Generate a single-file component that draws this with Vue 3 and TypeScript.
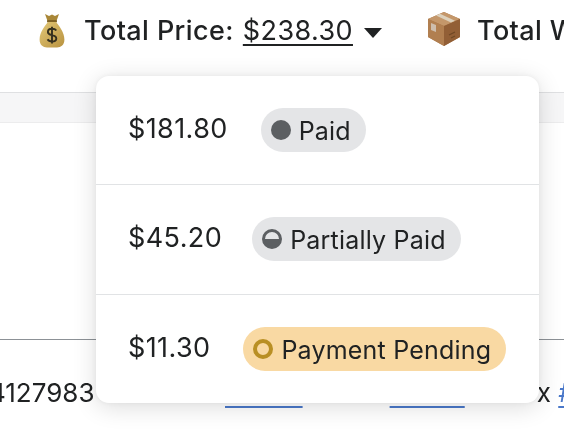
<script setup lang="ts">
interface Row { amount: string; label: string; kind: 'paid' | 'partial' | 'pending' }
const rows: Row[] = [
  { amount: '$181.80', label: 'Paid', kind: 'paid' },
  { amount: '$45.20', label: 'Partially Paid', kind: 'partial' },
  { amount: '$11.30', label: 'Payment Pending', kind: 'pending' },
]
</script>

<template>
  <div class="page">
    <header class="bar">
      <svg class="bag" viewBox="0 0 26 35" aria-hidden="true">
        <defs>
          <linearGradient id="bagFill" x1="0" y1="0" x2="1" y2="1">
            <stop offset="0" stop-color="#e3c878" />
            <stop offset="1" stop-color="#b8923f" />
          </linearGradient>
        </defs>
        <path d="M6 1 L10 3 L13 1.5 L16 3 L20 1 L17.5 8 L8.5 8 Z" fill="#a98737" />
        <rect x="8" y="7" width="10" height="2.4" rx="1" fill="#7f6225" />
        <path d="M9 9 C6 13 .6 19 .6 26.5 C.6 32 4 34.4 8 34.4 L18 34.4 C22 34.4 25.4 32 25.4 26.5 C25.4 19 20 13 17 9 Z" fill="url(#bagFill)" />
        <path d="M17.3 17.6 C16.4 16.2 14.8 15.7 13 15.7 C10.6 15.7 8.9 16.9 8.9 18.9 C8.9 21 10.8 21.6 13 22.1 C15.3 22.6 17.3 23.2 17.3 25.4 C17.3 27.4 15.4 28.5 13 28.5 C11 28.5 9.4 27.8 8.6 26.3 M13 13.8 V30.4" fill="none" stroke="#35301f" stroke-width="1.9" />
      </svg>
      <span class="total">Total Price:</span>
      <span class="price">$238.30</span>
      <span class="caret"></span>
      <svg class="box" viewBox="0 0 34 36" aria-hidden="true">
        <path d="M17 1 L33 8 L33 26 L17 35 L1 26 L1 8 Z" fill="#a8764a" />
        <path d="M17 1 L33 8 L17 15 L1 8 Z" fill="#c4976a" />
        <path d="M17 15 L33 8 L33 26 L17 35 Z" fill="#925f36" />
        <path d="M17 15 L1 8 L1 26 L17 35 Z" fill="#b17f50" />
        <path d="M9 4.5 L13 2.8 L28 9.8 L24 11.5 Z" fill="#dcd0bb" />
        <path d="M4 12 L9 14 L9 21 L4 19 Z" fill="#d8d3cc" opacity=".75" />
        <path d="M22 24 L28 21 M24 27 L28 25" stroke="#6f4825" stroke-width="1.2" />
      </svg>
      <span class="total second">Total Weight</span>
    </header>

    <div class="band"></div>
    <div class="panel"></div>

    <div class="cells">
      <span class="order">4127983</span>
      <a class="link first">#1042</a>
      <a class="link second-link">#1042</a>
      <span class="tail">x <a class="link">#</a></span>
    </div>

    <div class="popover">
      <div v-for="row in rows" :key="row.amount" class="row">
        <span class="amount">{{ row.amount }}</span>
        <span class="badge" :class="row.kind">
          <span class="dot"></span>
          <span>{{ row.label }}</span>
        </span>
      </div>
    </div>
  </div>
</template>

<style>
html, body { margin: 0; background: #fff; }
</style>

<style scoped>
.page {
  position: relative;
  width: 564px;
  height: 444px;
  overflow: hidden;
  background: #fff;
  color: #202223;
  font-family: Inter, "Liberation Sans", sans-serif;
  filter: blur(0.35px);
}
.bar {
  height: 92px;
  box-sizing: border-box;
  padding: 12px 0 0 39px;
  display: flex;
  align-items: flex-start;
  white-space: nowrap;
  font-size: 27px;
  letter-spacing: .4px;
  line-height: 38px;
}
.bag { width: 26px; height: 35px; margin-top: 1px; flex: none; }
.total { font-weight: 500; margin-left: 19px; flex: none; }
.price { margin-left: 9px; flex: none; text-decoration: underline; text-underline-offset: 4px; text-decoration-thickness: 1.5px; }
.caret {
  width: 0;
  height: 0;
  margin: 16px 0 0 11px;
  border-left: 9.5px solid transparent;
  border-right: 9.5px solid transparent;
  border-top: 10px solid #202223;
  flex: none;
}
.box { width: 34px; height: 36px; margin: -1px 0 0 45px; flex: none; }
.second { margin-left: 16px; }
.band {
  height: 31px;
  background: #f6f6f7;
  border-top: 1.5px solid #dfe0e2;
  border-bottom: 1px solid #ececed;
  box-sizing: border-box;
}
.panel {
  height: 217px;
  border-bottom: 1.5px solid #8c9196;
  box-sizing: border-box;
}
.cells {
  display: flex;
  font-size: 26px;
  line-height: 34px;
  padding-top: 36px;
  margin-left: -11px;
  white-space: nowrap;
}
.cells > * { flex: none; }
.order { width: 236px; }
.link { color: #4a78c9; text-decoration: underline; text-underline-offset: 4px; text-decoration-thickness: 2px; }
.first { margin-right: 87px; letter-spacing: .3px; }
.second-link { letter-spacing: -.2px; }
.tail { margin-left: 72px; }
.popover {
  position: absolute;
  left: 96px;
  top: 76px;
  width: 443px;
  height: 327px;
  background: #fff;
  border-radius: 13px;
  box-shadow: 0 0 5px rgba(23, 24, 24, .05), 0 4px 24px rgba(0, 0, 0, .14);
  display: flex;
  flex-direction: column;
}
.row {
  height: 109px;
  box-sizing: border-box;
  display: flex;
  align-items: flex-start;
  padding: 32px 0 0 32px;
  border-bottom: 1.5px solid #e1e3e5;
}
.row:nth-child(2) { height: 110.5px; }
.row:last-child { border-bottom: 0; }
.amount { font-size: 27px; letter-spacing: .4px; line-height: 41px; }
.badge {
  display: inline-flex;
  align-items: center;
  height: 44px;
  margin-left: 33px;
  padding: 0 15px 0 10px;
  border-radius: 22px;
  background: #e4e5e7;
  font-size: 25px;
  letter-spacing: .2px;
  gap: 8px;
}
.badge > span:last-child { position: relative; top: 1px; }
.partial { margin-left: 30px; }
.dot {
  width: 20px;
  height: 20px;
  border-radius: 50%;
  box-sizing: border-box;
  flex: none;
  background: #5c5f62;
}
.partial .dot {
  background: linear-gradient(#e4e5e7 0 50%, #5c5f62 50%);
  border: 3px solid #5c5f62;
}
.pending { background: #f9d9a3; }
.pending .dot {
  background: transparent;
  border: 4px solid #b98f24;
}
</style>
